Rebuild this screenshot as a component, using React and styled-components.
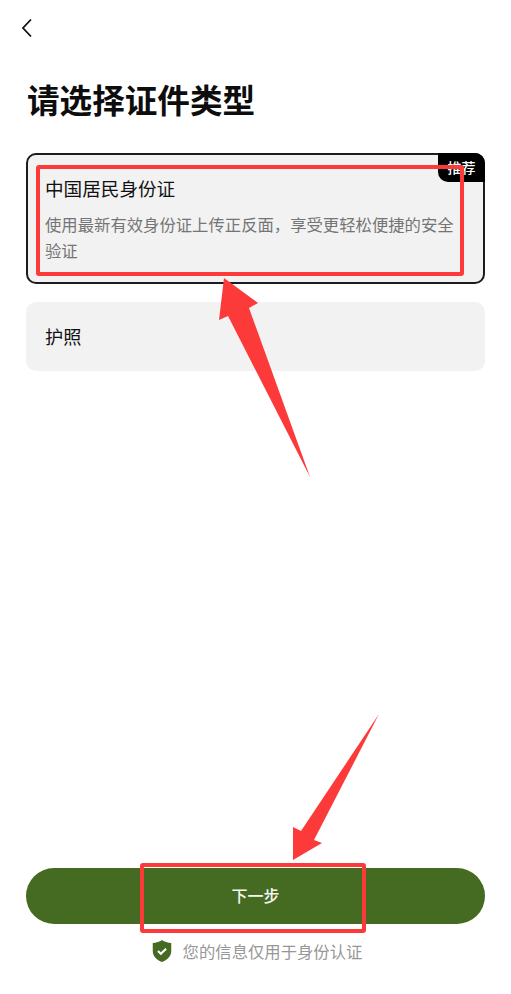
import React from "react";
import styled, { createGlobalStyle } from "styled-components";

const GlobalStyle = createGlobalStyle`
  html, body {
    margin: 0;
    padding: 0;
    background: #fff;
  }
  body {
    font-family: "Noto Sans CJK SC", "Noto Sans", sans-serif;
    color: #111;
  }
  * {
    box-sizing: border-box;
  }
`;

const Page = styled.div`
  position: relative;
  width: 511px;
  height: 994px;
  overflow: hidden;
  display: flex;
  flex-direction: column;
  padding: 0 26px 30px;
`;

const BackButton = styled.button`
  display: block;
  width: 16px;
  height: 20px;
  margin: 18px 0 0 -7px;
  padding: 0;
  border: 0;
  background: none;
`;

const Title = styled.h1`
  margin: 39px 0 0 1px;
  font-size: 32.6px;
  line-height: 44px;
  font-weight: 700;
  color: #0d0d0d;
`;

const CardList = styled.div`
  display: flex;
  flex-direction: column;
  gap: 18px;
  margin-top: 32px;
`;

const Card = styled.div`
  position: relative;
  padding: ${(p) => (p.$active ? "20px 17px 18px" : "0 19px 2px")};
  height: ${(p) => (p.$active ? "131px" : "69px")};
  display: flex;
  flex-direction: column;
  justify-content: ${(p) => (p.$active ? "flex-start" : "center")};
  background: #f2f2f2;
  border: ${(p) => (p.$active ? "2px solid #1c1c1c" : "0")};
  border-radius: 10px;
`;

const CardTitle = styled.div`
  font-size: ${(p) => p.$size || 18.2}px;
  line-height: 26px;
  color: #111;
`;

const CardDesc = styled.div`
  margin-top: 11px;
  font-size: 16.35px;
  line-height: 25.5px;
  color: #757575;
`;

const Badge = styled.span`
  position: absolute;
  top: -2px;
  right: -2px;
  width: 47px;
  height: 29px;
  padding-top: 4px;
  text-align: center;
  background: #000;
  color: #fff;
  font-size: 14px;
  font-weight: 500;
  line-height: 20px;
  border-radius: 0 10px 0 10px;
`;

const Highlight = styled.div`
  position: absolute;
  top: ${(p) => p.$top}px;
  left: ${(p) => p.$left}px;
  width: ${(p) => p.$width}px;
  height: ${(p) => p.$height}px;
  border: 4px solid #fc3a3a;
  border-radius: 3px;
  pointer-events: none;
`;

const Footer = styled.div`
  margin-top: auto;
  display: flex;
  flex-direction: column;
  align-items: center;
`;

const NextButton = styled.button`
  position: relative;
  width: 100%;
  height: 56px;
  padding: 0 0 2px;
  border: 0;
  border-radius: 28px;
  background: #456a21;
  color: #f4f6f0;
  font-family: inherit;
  font-size: 16px;
  font-weight: 500;
`;

const Notice = styled.div`
  display: flex;
  align-items: center;
  gap: 11px;
  margin-top: 14px;
  padding-left: 3px;
  height: 26px;
  font-size: 16.35px;
  line-height: 26px;
  color: #979797;
`;

const ArrowLayer = styled.svg`
  position: absolute;
  top: 0;
  left: 0;
  pointer-events: none;
`;

function App() {
  return (
    <Page>
      <GlobalStyle />
      <BackButton aria-label="返回">
        <svg width="16" height="20" viewBox="0 0 16 20" fill="none">
          <path d="M12 1.5 L4 10 L12 18.5" stroke="#111" strokeWidth="1.8" />
        </svg>
      </BackButton>
      <Title>请选择证件类型</Title>
      <CardList>
        <Card $active>
          <Badge>推荐</Badge>
          <CardTitle $size={18.6}>中国居民身份证</CardTitle>
          <CardDesc>使用最新有效身份证上传正反面，享受更轻松便捷的安全验证</CardDesc>
          <Highlight $top={10} $left={8} $width={428} $height={111} />
        </Card>
        <Card>
          <CardTitle>护照</CardTitle>
        </Card>
      </CardList>
      <Footer>
        <NextButton>
          下一步
          <Highlight $top={-5} $left={114} $width={226} $height={70} />
        </NextButton>
        <Notice>
          <svg width="20" height="24" viewBox="0 0 21 24">
            <path
              d="M10.5 0.5 C13 2.4 16.5 3.4 20.2 3.6 V12 C20.2 17.6 16 21.4 10.5 23.6 C5 21.4 0.8 17.6 0.8 12 V3.6 C4.5 3.4 8 2.4 10.5 0.5 Z"
              fill="#456a21"
            />
            <path
              d="M6.3 12 L9.3 15 L14.8 9.6"
              fill="none"
              stroke="#fff"
              strokeWidth="2.2"
            />
          </svg>
          您的信息仅用于身份认证
        </Notice>
      </Footer>
      <ArrowLayer width="511" height="994" viewBox="0 0 511 994">
        <polygon
          points="224,278 258,303 249,308 310,477 228,316 219,320"
          fill="#fc3a3a"
        />
        <polygon
          points="379,714 314,840 322,843 293,860 293,827 301,831"
          fill="#fc3a3a"
        />
      </ArrowLayer>
    </Page>
  );
}

export default App;
